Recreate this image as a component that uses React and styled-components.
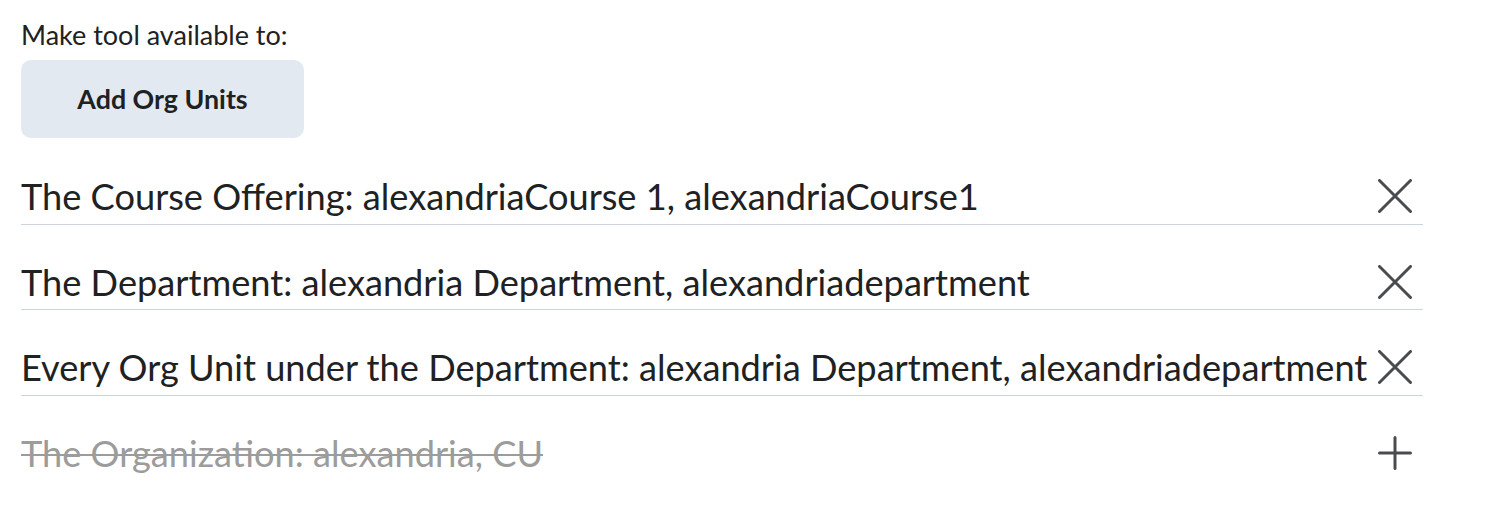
import React from "react";
import styled, { createGlobalStyle } from "styled-components";

const Global = createGlobalStyle`
  body {
    margin: 0;
    background: #ffffff;
    font-family: Lato, "Liberation Sans", sans-serif;
    color: #202122;
  }
`;

const Page = styled.div`
  padding: 16px 0 0 21px;
  width: 1402px;
`;

const Label = styled.p`
  margin: 0;
  font-size: 27px;
  line-height: 37px;
`;

const AddButton = styled.button`
  margin-top: 7px;
  width: 283px;
  height: 78px;
  border: none;
  border-radius: 10px;
  background: #e3e9f1;
  color: #202122;
  font-family: inherit;
  font-size: 26.8px;
  font-weight: 700;
  cursor: pointer;
`;

const List = styled.ul`
  list-style: none;
  margin: 1px 0 0;
  padding: 0;
`;

const Row = styled.li`
  display: flex;
  align-items: center;
  justify-content: space-between;
  height: 84.5px;
  border-bottom: ${(p) => (p.last ? "none" : "1.5px solid #cdd5dc")};
`;

const Name = styled.span`
  font-size: 36.2px;
  padding-top: 30px;
  color: ${(p) => (p.removed ? "#9c9c9c" : "#202122")};
  text-decoration: ${(p) => (p.removed ? "line-through" : "none")};
  text-decoration-thickness: 2px;
  white-space: nowrap;
`;

const IconButton = styled.button`
  display: flex;
  align-items: center;
  justify-content: center;
  width: 44px;
  height: 44px;
  margin: 30px 6px 0 0;
  padding: 0;
  border: none;
  background: transparent;
  color: #494c4e;
  cursor: pointer;
`;

const CloseIcon = () => (
  <svg width="34" height="34" viewBox="0 0 34 34" fill="none">
    <path d="M1.5 1.5L32.5 32.5M32.5 1.5L1.5 32.5" stroke="currentColor" strokeWidth="3" strokeLinecap="round" />
  </svg>
);

const PlusIcon = () => (
  <svg width="34" height="34" viewBox="0 0 34 34" fill="none">
    <path d="M17 1.5V32.5M1.5 17H32.5" stroke="currentColor" strokeWidth="3" strokeLinecap="round" />
  </svg>
);

const units = [
  { label: "The Course Offering: alexandriaCourse 1, alexandriaCourse1" },
  { label: "The Department: alexandria Department, alexandriadepartment" },
  { label: "Every Org Unit under the Department: alexandria Department, alexandriadepartment" },
  { label: "The Organization: alexandria, CU", removed: true },
];

export default function App() {
  return (
    <>
      <Global />
      <Page>
        <Label>Make tool available to:</Label>
        <AddButton>Add Org Units</AddButton>
        <List>
          {units.map((u, i) => (
            <Row key={u.label} last={i === units.length - 1}>
              <Name removed={u.removed}>{u.label}</Name>
              <IconButton aria-label={u.removed ? "Restore" : "Remove"}>
                {u.removed ? <PlusIcon /> : <CloseIcon />}
              </IconButton>
            </Row>
          ))}
        </List>
      </Page>
    </>
  );
}
